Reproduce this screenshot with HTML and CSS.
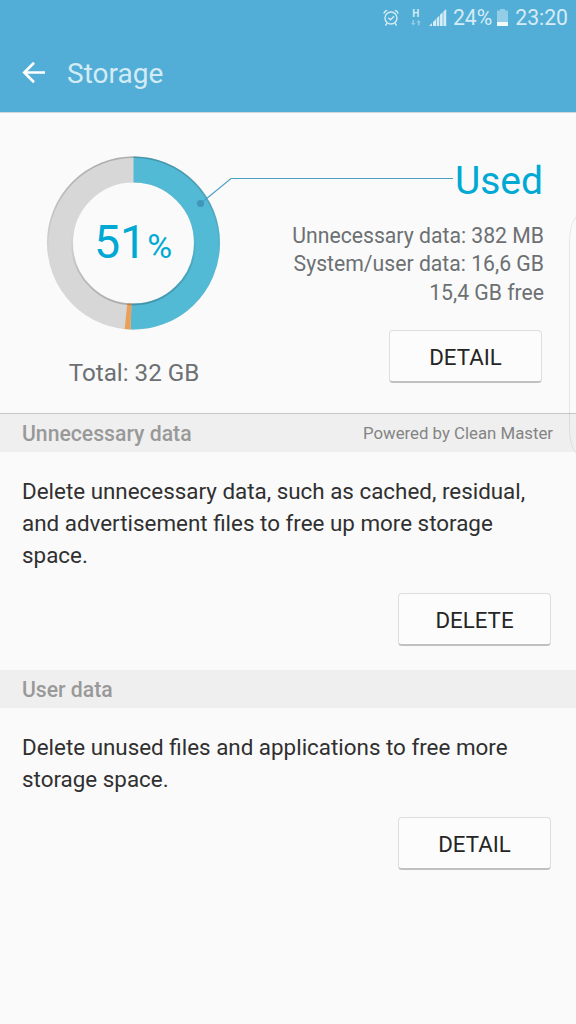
FILE: index.html
```html
<!DOCTYPE html>
<html lang="en">
<head>
    <meta charset="UTF-8">
    <meta name="viewport" content="width=device-width, initial-scale=1.0">
    <title>Storage</title>
    <link rel="stylesheet" href="styles.css">
</head>
<body>
    <header>
        <div class="status-bar">
            <svg class="icon-alarm" width="16" height="18" viewBox="0 0 16 18" fill="none" stroke="currentColor" stroke-width="1.4">
                <circle cx="8" cy="9" r="6"/>
                <path d="M5.3 8.8l2.2 2 3.6-3.6M.9 4.6C1.2 3 2.4 1.8 4.2 1.4M15.1 4.6C14.8 3 13.6 1.8 11.8 1.4M4 14.2l-1.5 2.3M12 14.2l1.5 2.3"/>
            </svg>
            <div class="network">
                <span>H</span>
                <svg width="10" height="6" viewBox="0 0 10 6" fill="currentColor">
                    <path d="M1.5 0h1.500v3h1.500L2.300 5.500 0 3h1.500zM7 5.500h1.500v-3H10L7.700 0 5.500 2.500H7z"/>
                </svg>
            </div>
            <svg class="icon-signal" width="18" height="17" viewBox="0 0 18 17" fill="currentColor">
                <path d="M0 17l3-3v3zM4 13l3-3v7H4zM7.700 9.300l2.600-2.500V17H7.700zM11 5.800l2.700-2.500V17H11zM14.400 2.500L17.200 0v17h-2.800z"/>
            </svg>
            <span class="percent">24%</span>
            <svg class="icon-battery" width="11" height="17" viewBox="0 0 11 17" fill="currentColor">
                <path opacity=".5" d="M3 0h5v1.500h3V13H0V1.500h3z"/>
                <path fill="#f2f9fc" d="M0 13h11v4H0z"/>
            </svg>
            <span class="time">23:20</span>
        </div>
        <div class="title-bar">
            <svg width="24" height="24" viewBox="0 0 24 24" fill="none" stroke="#fff" stroke-width="2.700">
                <path d="M24 10.500H3.500M13 .8L3.300 10.500l9.700 9.700"/>
            </svg>
            <h1>Storage</h1>
        </div>
    </header>

    <main>
        <section class="summary">
            <div class="usage">
                <div class="chart">
                    <svg width="176" height="176" viewBox="0 0 176 176">
                        <defs>
                            <linearGradient id="rim" x1="0" y1="0" x2="0" y2="1">
                                <stop offset="0" stop-color="#000" stop-opacity=".2"/>
                                <stop offset=".6" stop-color="#000" stop-opacity="0"/>
                            </linearGradient>
                            <linearGradient id="innerRim" x1="0" y1="0" x2="0" y2="1">
                                <stop offset=".4" stop-color="#000" stop-opacity="0"/>
                                <stop offset="1" stop-color="#000" stop-opacity=".2"/>
                            </linearGradient>
                        </defs>
                        <g transform="translate(-.5 0)">
                            <circle cx="88" cy="88" r="73.500" fill="none" stroke="#d7d7d7" stroke-width="26"/>
                            <path d="M88 14.500A73.500 73.500 0 1 1 85.500 161.460" fill="none" stroke="#52bad5" stroke-width="26"/>
                            <path d="M85.500 161.460A73.500 73.500 0 0 1 80.500 161.120" fill="none" stroke="#eba059" stroke-width="26"/>
                            <circle cx="88" cy="88" r="85.800" fill="none" stroke="url(#rim)" stroke-width="1.800"/>
                            <circle cx="88" cy="88" r="61.500" fill="none" stroke="url(#innerRim)" stroke-width="1.800"/>
                        </g>
                    </svg>
                    <div class="chart-value">51<span>%</span></div>
                </div>
                <p class="total">Total: 32 GB</p>
            </div>
            <div class="details">
                <h2>Used</h2>
                <p>Unnecessary data: 382 MB</p>
                <p>System/user data: 16,6 GB</p>
                <p>15,4 GB free</p>
                <button>DETAIL</button>
            </div>
            <!-- line from the chart to the "Used" label -->
            <svg class="leader" width="257" height="34" viewBox="0 0 257 34">
                <path d="M4.500 29.500L35 4.500H257" fill="none" stroke="#4ba0c4" stroke-width="1.200"/>
                <circle cx="4.500" cy="29.500" r="3.600" fill="#4096b9"/>
            </svg>
        </section>

        <div class="section-header first">
            <h3>Unnecessary data</h3>
            <span>Powered by Clean Master</span>
        </div>
        <section class="block">
            <p>Delete unnecessary data, such as cached, residual, and advertisement files to free up more storage space.</p>
            <button>DELETE</button>
        </section>

        <div class="section-header">
            <h3>User data</h3>
        </div>
        <section class="block">
            <p>Delete unused files and applications to free more storage space.</p>
            <button>DETAIL</button>
        </section>
    </main>

    <div class="edge-handle"></div>
</body>
</html>
```
FILE: styles.css
```css
* {
    box-sizing: border-box;
}
body {
    position: relative;
    width: 576px;
    height: 1024px;
    margin: 0;
    overflow: hidden;
    font-family: Roboto, "Liberation Sans", sans-serif;
    background-color: #fafafa;
    color: #303030;
}
h1, h2, h3, p {
    margin: 0;
    font-weight: 400;
}
header {
    height: 113px;
    background-color: #52aed6;
    border-bottom: 1px solid #d0d6d9;
}
.status-bar {
    display: flex;
    justify-content: flex-end;
    align-items: center;
    height: 35px;
    padding-right: 8px;
    color: #d5ecf6;
    font-size: 21.2px;
}
.icon-alarm {
    margin-right: 12px;
}
.network {
    display: flex;
    flex-direction: column;
    align-items: center;
    margin-right: 8px;
    font-size: 10px;
    font-weight: 700;
    line-height: 10px;
}
.network svg {
    margin-top: 1px;
    opacity: 0.5;
}
.icon-signal {
    margin-right: 6px;
}
.icon-battery {
    margin: 0 7px 0 5px;
}
.title-bar {
    display: flex;
    align-items: center;
    height: 77px;
    padding-left: 21px;
}
.title-bar h1 {
    margin-left: 22px;
    font-size: 28px;
    color: #d3ebf5;
}
.summary {
    position: relative;
    display: flex;
    justify-content: space-between;
    height: 300px;
    padding: 42px 32px 0 46px;
}
.usage {
    width: 176px;
    text-align: center;
}
.chart {
    display: grid;
    place-items: center;
    height: 176px;
}
.chart > * {
    grid-area: 1 / 1;
}
.chart-value {
    padding: 1px 2px 0 0;
    font-size: 46.5px;
    line-height: 46px;
    color: #00a9d4;
}
.chart-value span {
    margin-left: 1px;
    font-size: 34px;
}
.total {
    margin-top: 28px;
    font-size: 24.2px;
    line-height: 28px;
    color: #6c7073;
}
.details {
    display: flex;
    flex-direction: column;
    align-items: flex-end;
    padding-top: 3px;
    font-size: 21.2px;
    line-height: 28.4px;
    color: #6c7073;
}
.details h2 {
    margin: 0 1px 18px 0;
    font-size: 39px;
    line-height: 46px;
    color: #00a9d4;
}
.details button {
    margin: 23px 2px 0 0;
}
.leader {
    position: absolute;
    left: 196px;
    top: 61px;
}
button {
    width: 153px;
    height: 53px;
    padding: 1px 0 0;
    border: 1px solid #dedede;
    border-bottom: 2px solid #c0c0c0;
    border-radius: 4px;
    background-color: #fcfcfc;
    font-family: inherit;
    font-size: 22.3px;
    color: #252525;
}
.section-header {
    display: flex;
    justify-content: space-between;
    align-items: center;
    height: 38px;
    padding: 1px 23px 0 22px;
    background-color: #efefef;
    color: #848484;
    font-size: 16.8px;
}
.section-header.first {
    height: 39px;
    border-top: 1px solid #c6c6c6;
}
.section-header span {
    padding-bottom: 2px;
}
.section-header h3 {
    font-size: 21.2px;
    font-weight: 500;
    color: #999;
}
.block {
    display: flex;
    flex-direction: column;
    height: 218px;
    padding: 23px 25px 0 22px;
}
.block p {
    font-size: 22.4px;
    line-height: 32px;
}
.block button {
    margin: 22px 0 0;
    align-self: flex-end;
}
/* edge panel handle */
.edge-handle {
    position: absolute;
    right: -14px;
    top: 215px;
    width: 21px;
    height: 240px;
    border: 1px solid rgba(0, 0, 0, 0.08);
    border-radius: 14px / 36px;
}
```
